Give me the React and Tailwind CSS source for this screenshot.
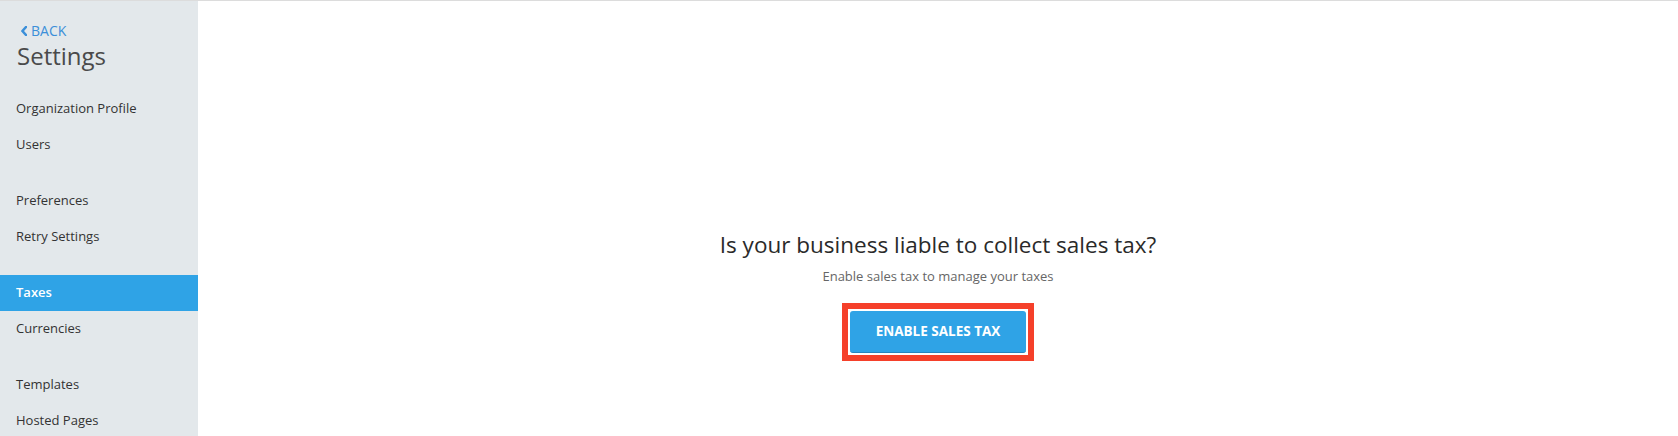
import React from "react";

const groups = [
  ["Organization Profile", "Users"],
  ["Preferences", "Retry Settings"],
  ["Taxes", "Currencies"],
  ["Templates", "Hosted Pages"],
];

const Sidebar = ({ active }) => {
  return (
    <aside className="w-[198px] shrink-0 bg-[#e3e8eb] overflow-hidden">
      <div className="pl-[21px] pt-[21px]">
        <a href="#" className="flex items-center gap-[4px] text-[14px] leading-[18px] text-[#3b8fd9]">
          <svg width="6" height="10" viewBox="0 0 6 10" className="shrink-0">
            <path d="M5 1 L1.4 5 L5 9" fill="none" stroke="currentColor" strokeWidth="2.6" strokeLinecap="round" strokeLinejoin="round" />
          </svg>
          <span>BACK</span>
        </a>
      </div>
      <h1 className="pl-[17px] mt-[2px] text-[24px] leading-[28px] text-[#4a4a4a]">Settings</h1>
      <nav className="mt-[21px] flex flex-col gap-[20px]">
        {groups.map((group, i) => (
          <ul key={i}>
            {group.map((item) => (
              <li
                key={item}
                className={
                  item === active
                    ? "h-9 flex items-center px-4 text-[13px] font-semibold text-white bg-[#2fa3e6]"
                    : "h-9 flex items-center px-4 text-[13px] text-[#333]"
                }
              >
                {item}
              </li>
            ))}
          </ul>
        ))}
      </nav>
    </aside>
  );
};

export default function App() {
  return (
    <div
      className="h-[436px] flex border-t border-[#dcdcdc] bg-white"
      style={{ fontFamily: "'Open Sans', Lato, sans-serif" }}
    >
      <Sidebar active="Taxes" />
      <main className="flex-1 flex flex-col items-center pt-[229px]">
        <h2 className="text-[22.5px] leading-[30px] text-[#2a2a2a]">
          Is your business liable to collect sales tax?
        </h2>
        <p className="mt-[6px] text-[13px] leading-[20px] text-[#666]">
          Enable sales tax to manage your taxes
        </p>
        <div className="mt-[17px] border-[6px] border-[#f5402a] p-[2px] bg-white">
          <button className="w-[176px] h-[42px] rounded-[3px] bg-[#2fa3e6] border-b border-[#2585bf] text-white text-[13.5px] font-bold">
            ENABLE SALES TAX
          </button>
        </div>
      </main>
    </div>
  );
}
